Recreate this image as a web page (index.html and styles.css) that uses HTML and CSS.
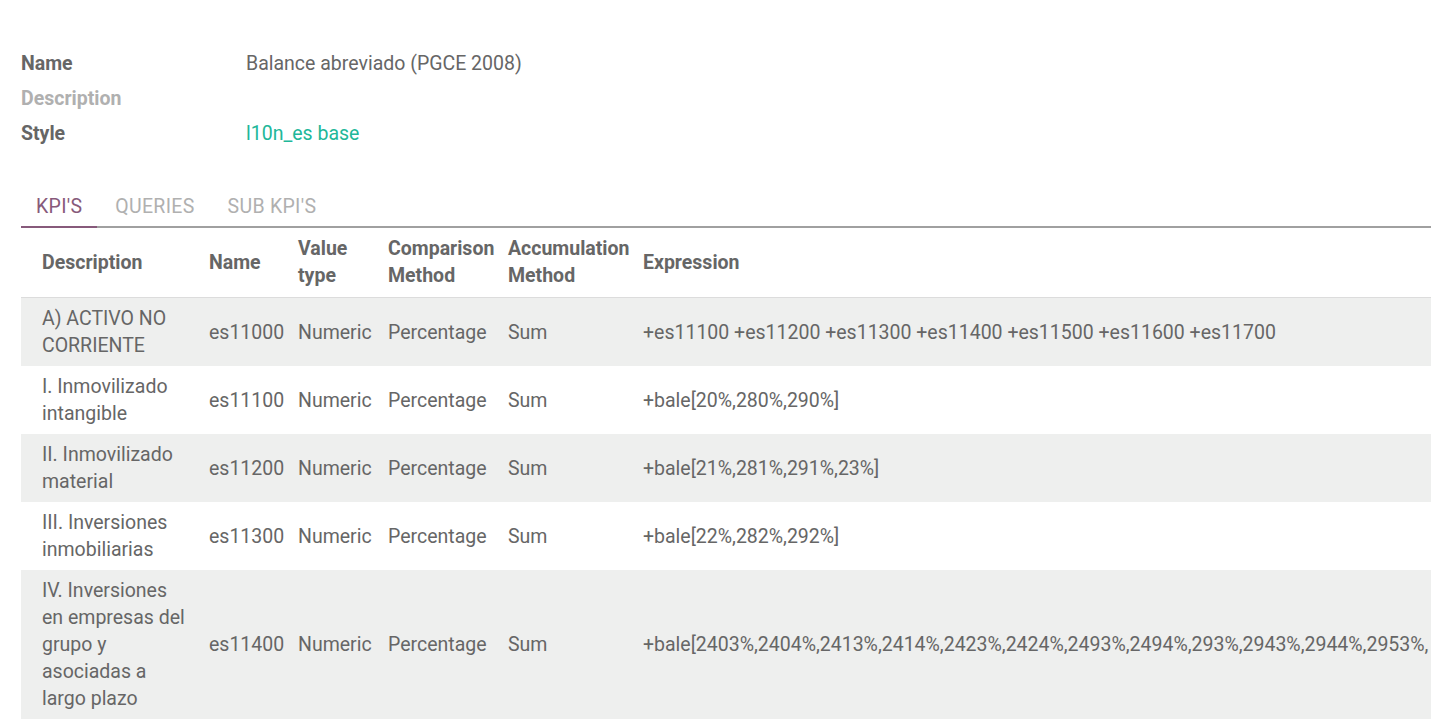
FILE: index.html
```html
<!DOCTYPE html>
<html>
<head>
<meta charset="utf-8">
<link rel="stylesheet" href="styles.css">
</head>
<body>
<div class="sheet">
  <div class="form">
    <div class="label">Name</div><div class="value">Balance abreviado (PGCE 2008)</div>
    <div class="label muted">Description</div><div class="value"></div>
    <div class="label">Style</div><div class="value link">l10n_es base</div>
  </div>

  <div class="tabs">
    <div class="tab active">KPI'S</div>
    <div class="tab">QUERIES</div>
    <div class="tab">SUB KPI'S</div>
  </div>

  <div class="table-wrap">
    <table class="list">
      <colgroup>
        <col class="c1"><col class="c2"><col class="c3"><col class="c4"><col class="c5"><col class="c6">
      </colgroup>
      <thead>
        <tr>
          <th>Description</th>
          <th>Name</th>
          <th>Value type</th>
          <th>Comparison Method</th>
          <th>Accumulation Method</th>
          <th>Expression</th>
        </tr>
      </thead>
      <tbody>
        <tr class="odd">
          <td>A) ACTIVO NO CORRIENTE</td><td>es11000</td><td>Numeric</td><td>Percentage</td><td>Sum</td>
          <td class="expr">+es11100 +es11200 +es11300 +es11400 +es11500 +es11600 +es11700</td>
        </tr>
        <tr>
          <td>I. Inmovilizado intangible</td><td>es11100</td><td>Numeric</td><td>Percentage</td><td>Sum</td>
          <td class="expr">+bale[20%,280%,290%]</td>
        </tr>
        <tr class="odd">
          <td>II. Inmovilizado material</td><td>es11200</td><td>Numeric</td><td>Percentage</td><td>Sum</td>
          <td class="expr">+bale[21%,281%,291%,23%]</td>
        </tr>
        <tr>
          <td>III. Inversiones inmobiliarias</td><td>es11300</td><td>Numeric</td><td>Percentage</td><td>Sum</td>
          <td class="expr">+bale[22%,282%,292%]</td>
        </tr>
        <tr class="odd">
          <td>IV. Inversiones en empresas del grupo y asociadas a largo plazo</td><td>es11400</td><td>Numeric</td><td>Percentage</td><td>Sum</td>
          <td class="expr">+bale[2403%,2404%,2413%,2414%,2423%,2424%,2493%,2494%,293%,2943%,2944%,2953%,</td>
        </tr>
      </tbody>
    </table>
  </div>
</div>
</body>
</html>
```

FILE: styles.css
```css
html, body {
  margin: 0;
  padding: 0;
  background: #ffffff;
}
body {
  font-family: Roboto, "Noto Sans", sans-serif;
  font-size: 19.5px;
  color: #666666;
}
.sheet {
  padding: 46px 12px 0 21px;
}
.form {
  display: grid;
  grid-template-columns: 225px 1fr;
  grid-auto-rows: 35px;
  align-items: center;
}
.label {
  font-weight: 700;
  color: #666666;
}
.label.muted {
  color: #b0b0b0;
}
.value {
  color: #666666;
}
.value.link {
  color: #21b799;
}
.tabs {
  display: flex;
  margin-top: 42px;
  border-bottom: 2px solid #a0a0a0;
}
.tab {
  padding: 0 15px 6px 15px;
  margin-bottom: -2px;
  color: #b0b0b0;
  line-height: 27px;
  letter-spacing: 0.3px;
  border-bottom: 2px solid transparent;
}
.tab + .tab {
  padding-left: 18px;
}
.tab.active {
  color: #875a7b;
  border-bottom-color: #875a7b;
}
.table-wrap {
  overflow: hidden;
}
.list {
  width: 100%;
  table-layout: fixed;
  border-collapse: collapse;
  line-height: 27px;
}
.c1 { width: 181px; }
.c2 { width: 89px; }
.c3 { width: 90px; }
.c4 { width: 120px; }
.c5 { width: 135px; }
.list th {
  font-weight: 700;
  text-align: left;
  vertical-align: middle;
  padding: 7px 7px 8px 7px;
  height: 54px;
  border-bottom: 1px solid #dcdcdc;
}
.list td {
  vertical-align: middle;
  padding: 7px 7px;
  height: 54px;
}
.list th:first-child,
.list td:first-child {
  padding-left: 21px;
  padding-right: 14px;
}
.list tr.odd td {
  background: #eeefee;
}
.list td.expr {
  white-space: nowrap;
  overflow: visible;
}
```
